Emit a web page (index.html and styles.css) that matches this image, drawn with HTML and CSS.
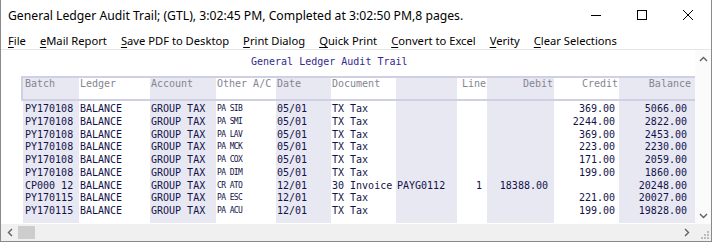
FILE: index.html
```html
<!DOCTYPE html>
<html lang="en">
<head>
  <meta charset="UTF-8" />
  <title>General Ledger Audit Trail</title>
  <link rel="stylesheet" href="styles.css">
</head>
<body>
  <div class="window">
    <div class="titlebar">
      <span class="title">General Ledger Audit Trail; (GTL), 3:02:45 PM, Completed at 3:02:50 PM,8 pages.</span>
      <div class="controls">
        <span class="ctl"><svg width="10" height="10"><path d="M0 5.5H10" stroke="#000" /></svg></span>
        <span class="ctl"><svg width="10" height="10"><rect x="0.5" y="0.5" width="9" height="9" fill="none" stroke="#000" /></svg></span>
        <span class="ctl"><svg width="10" height="10"><path d="M0 0L10 10M10 0L0 10" stroke="#000" /></svg></span>
      </div>
    </div>

    <nav class="menubar">
      <span class="menu-item"><u>F</u>ile</span>
      <span class="menu-item"><u>e</u>Mail Report</span>
      <span class="menu-item"><u>S</u>ave PDF to Desktop</span>
      <span class="menu-item"><u>P</u>rint Dialog</span>
      <span class="menu-item"><u>Q</u>uick Print</span>
      <span class="menu-item"><u>C</u>onvert to Excel</span>
      <span class="menu-item"><u>V</u>erity</span>
      <span class="menu-item"><u>C</u>lear Selections</span>
    </nav>

    <div class="client">
      <div class="viewport">
        <div class="report">
          <div class="report-title">General Ledger Audit Trail</div>

          <div class="head">
            <div class="hcell shade pad-batch">Batch</div>
            <div class="hcell">Ledger</div>
            <div class="hcell shade">Account</div>
            <div class="hcell">Other A/C</div>
            <div class="hcell shade">Date</div>
            <div class="hcell">Document</div>
            <div class="hcell shade"></div>
            <div class="hcell num">Line</div>
            <div class="hcell shade num">Debit</div>
            <div class="hcell num">Credit</div>
            <div class="hcell shade num balance-h">Balance</div>
          </div>

          <div class="body">
            <div class="col shade pad-batch">
              <div>PY170108</div><div>PY170108</div><div>PY170108</div><div>PY170108</div><div>PY170108</div><div>PY170108</div><div>CP000 12</div><div>PY170115</div><div>PY170115</div>
            </div>
            <div class="col">
              <div>BALANCE</div><div>BALANCE</div><div>BALANCE</div><div>BALANCE</div><div>BALANCE</div><div>BALANCE</div><div>BALANCE</div><div>BALANCE</div><div>BALANCE</div>
            </div>
            <div class="col shade">
              <div>GROUP TAX</div><div>GROUP TAX</div><div>GROUP TAX</div><div>GROUP TAX</div><div>GROUP TAX</div><div>GROUP TAX</div><div>GROUP TAX</div><div>GROUP TAX</div><div>GROUP TAX</div>
            </div>
            <div class="col small">
              <div>PA SIB</div><div>PA SMI</div><div>PA LAV</div><div>PA MCK</div><div>PA COX</div><div>PA DIM</div><div>CR ATO</div><div>PA ESC</div><div>PA ACU</div>
            </div>
            <div class="col shade">
              <div>05/01</div><div>05/01</div><div>05/01</div><div>05/01</div><div>05/01</div><div>05/01</div><div>12/01</div><div>12/01</div><div>12/01</div>
            </div>
            <div class="col">
              <div>TX Tax</div><div>TX Tax</div><div>TX Tax</div><div>TX Tax</div><div>TX Tax</div><div>TX Tax</div><div>30 Invoice</div><div>TX Tax</div><div>TX Tax</div>
            </div>
            <div class="col shade">
              <div></div><div></div><div></div><div></div><div></div><div></div><div>PAYG0112</div><div></div><div></div>
            </div>
            <div class="col num line-c">
              <div></div><div></div><div></div><div></div><div></div><div></div><div>1</div><div></div><div></div>
            </div>
            <div class="col shade num debit-c">
              <div></div><div></div><div></div><div></div><div></div><div></div><div>18388.00</div><div></div><div></div>
            </div>
            <div class="col num credit-c">
              <div>369.00</div><div>2244.00</div><div>369.00</div><div>223.00</div><div>171.00</div><div>199.00</div><div></div><div>221.00</div><div>199.00</div>
            </div>
            <div class="col shade num balance-c">
              <div>5066.00</div><div>2822.00</div><div>2453.00</div><div>2230.00</div><div>2059.00</div><div>1860.00</div><div>20248.00</div><div>20027.00</div><div>19828.00</div>
            </div>
          </div>
        </div>

        <div class="vscroll">
          <span class="arrow"><svg width="9" height="6"><path d="M1 5L4.5 1.5L8 5" stroke="#606060" stroke-width="1.4" fill="none" /></svg></span>
          <span class="arrow"><svg width="9" height="6"><path d="M1 1L4.5 4.5L8 1" stroke="#606060" stroke-width="1.4" fill="none" /></svg></span>
        </div>
      </div>

      <div class="hscroll">
        <span class="arrow"><svg width="6" height="9"><path d="M5 1L1.5 4.5L5 8" stroke="#606060" stroke-width="1.4" fill="none" /></svg></span>
        <span class="thumb"></span>
        <span class="track"></span>
        <span class="arrow"><svg width="6" height="9"><path d="M1 1L4.5 4.5L1 8" stroke="#606060" stroke-width="1.4" fill="none" /></svg></span>
        <span class="grip">
          <svg width="10" height="10">
            <rect x="7" y="1" width="2" height="2" fill="#bcbcbc" />
            <rect x="4" y="4" width="2" height="2" fill="#bcbcbc" />
            <rect x="7" y="4" width="2" height="2" fill="#bcbcbc" />
            <rect x="1" y="7" width="2" height="2" fill="#bcbcbc" />
            <rect x="4" y="7" width="2" height="2" fill="#bcbcbc" />
            <rect x="7" y="7" width="2" height="2" fill="#bcbcbc" />
          </svg>
        </span>
      </div>
    </div>
  </div>
</body>
</html>
```

FILE: styles.css
```css
* {
  box-sizing: border-box;
}
body {
  margin: 0;
  width: 712px;
  height: 242px;
  overflow: hidden;
  background: white;
  font-family: "Noto Sans", Arial, sans-serif;
  color: #000;
}
.window {
  height: 242px;
  border: 1px solid #8a8a8a;
  border-top: none;
  display: flex;
  flex-direction: column;
}

/* title bar */
.titlebar {
  height: 30px;
  display: flex;
  align-items: center;
}
.title {
  flex: 1;
  padding-left: 7px;
  font-size: 12.2px;
  white-space: nowrap;
}
.controls {
  display: flex;
  height: 30px;
}
.ctl {
  width: 46px;
  display: flex;
  align-items: center;
  justify-content: center;
}

/* menu */
.menubar {
  height: 20px;
  padding-top: 2px;
  display: flex;
  align-items: center;
  font-size: 11.2px;
  border-bottom: 1px solid #e6e6e6;
}
.menu-item {
  padding: 0 7px;
  white-space: nowrap;
}
.menu-item u {
  text-decoration-thickness: 1px;
  text-underline-offset: 2px;
}

/* client area */
.client {
  flex: 1;
  display: flex;
  flex-direction: column;
}
.viewport {
  flex: 1;
  display: flex;
  min-height: 0;
}
.report {
  flex: 1;
  overflow: hidden;
  padding-left: 20px;
  font-family: "DejaVu Sans Mono", "Liberation Mono", monospace;
  font-size: 10px;
}
.report-title {
  padding: 6px 0 0 230px;
  line-height: 12px;
  color: #332a8c;
  white-space: pre;
}
.head {
  margin-top: 8px;
  width: 676px;
  height: 25px;
  border: 2px solid #cfd0e3;
  display: grid;
  grid-template-columns: 56px 71px 66px 60px 55px 65px 61px 30px 67px 65px 76px;
  color: #85858f;
}
.hcell {
  line-height: 11px;
  padding-left: 1px;
  white-space: pre;
}
.body {
  margin-left: 2px;
  height: 122px;
  display: grid;
  grid-template-columns: 56px 71px 66px 60px 55px 65px 61px 30px 67px 65px 76px;
  color: #12124a;
}
.col {
  padding-top: 2px;
  padding-left: 1px;
}
.col div {
  height: 12.75px;
  line-height: 12.75px;
  white-space: pre;
}
.shade {
  background: #e8e8f3;
}
.pad-batch {
  padding-left: 2px;
}
.num {
  text-align: right;
  padding-left: 0;
}
.hcell.num {
  padding-right: 1px;
}
.hcell.balance-h {
  padding-right: 4px;
}
.col.line-c {
  padding-right: 5px;
}
.col.debit-c {
  padding-right: 6px;
}
.col.credit-c {
  padding-right: 4px;
}
.col.balance-c {
  padding-right: 8px;
}
.small {
  font-size: 8px;
  letter-spacing: -0.6px;
}

/* scrollbars */
.vscroll {
  width: 16px;
  display: flex;
  flex-direction: column;
  justify-content: space-between;
  background: #fbfbfb;
}
.arrow {
  width: 16px;
  height: 17px;
  display: flex;
  align-items: center;
  justify-content: center;
}
.hscroll {
  height: 17px;
  display: flex;
  background: #f0f0f0;
}
.hscroll .arrow {
  width: 17px;
}
.thumb {
  width: 17px;
  margin: 2px 0;
  background: #cdcdcd;
}
.track {
  flex: 1;
}
.grip {
  width: 16px;
  display: flex;
  align-items: flex-end;
  justify-content: flex-end;
  padding: 0 1px 1px 0;
}
```
